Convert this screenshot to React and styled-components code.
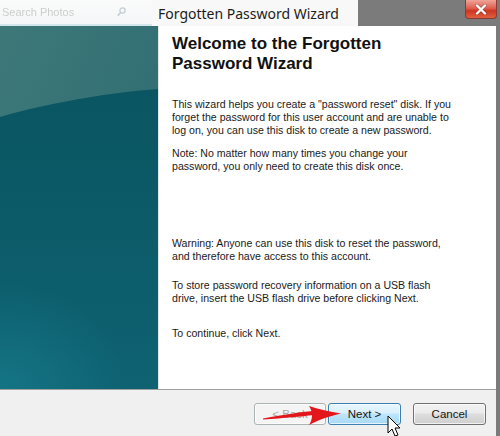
import React from 'react';
import styled, { createGlobalStyle } from 'styled-components';

const Global = createGlobalStyle`
  html, body { margin: 0; padding: 0; overflow: hidden; background: #7b7b7c; }
`;

const Page = styled.div`
  position: relative;
  width: 500px;
  height: 436px;
  display: grid;
  grid-template-rows: 26px 1fr;
  overflow: hidden;
  font-family: "Liberation Sans", Arial, sans-serif;
`;

const TopBar = styled.div`
  display: flex;
  background: #7b7b7c;
`;

const SearchArea = styled.div`
  width: 152px;
  display: flex;
  align-items: center;
  justify-content: space-between;
  padding: 0 26px 0 2px;
  box-sizing: border-box;
  background: linear-gradient(#fbfbfb, #f4f6f7);
  border-bottom: 2px solid #d3e6ec;
`;

const SearchHint = styled.span`
  font-size: 11px;
  color: #cdcdcd;
  filter: blur(0.7px);
`;

const TitleArea = styled.div`
  width: 206px;
  display: flex;
  align-items: center;
  padding-left: 6px;
  box-sizing: border-box;
  background: #f8f8f8;
  font-family: "Noto Sans", "Open Sans", sans-serif;
  font-size: 14px;
  color: #1c1c1c;
  white-space: nowrap;
`;

const GreyArea = styled.div`
  flex: 1;
  display: flex;
  justify-content: flex-end;
  align-items: flex-start;
  padding-right: 3px;
`;

const CloseButton = styled.div`
  width: 32px;
  height: 19px;
  display: flex;
  align-items: center;
  justify-content: center;
  border: 1px solid #8a3a33;
  border-top: none;
  border-radius: 0 0 4px 4px;
  background: linear-gradient(#eea598 0%, #e0604f 45%, #cf3522 60%, #e0603f 100%);
  box-sizing: border-box;
`;

const Body = styled.div`
  display: flex;
`;

const Window = styled.div`
  flex: 1;
  display: flex;
  flex-direction: column;
`;

const EdgeStrip = styled.div`
  width: 4px;
  background: #7b7b7c;
`;

const Main = styled.div`
  height: 363px;
  display: flex;
`;

const Sidebar = styled.div`
  width: 158px;
  flex-shrink: 0;
  line-height: 0;
`;

const Content = styled.div`
  flex: 1;
  background: #fff;
  border-left: 1px solid #e6e6e6;
  padding: 8px 0 0 13px;
`;

const Heading = styled.h1`
  margin: 0;
  font-family: "Liberation Sans", Arial, sans-serif;
  font-weight: bold;
  font-size: 17px;
  line-height: 20px;
  color: #111;
`;

const Para = styled.p`
  margin: ${p => p.$top}px 0 0;
  font-size: 10.6px;
  line-height: 13px;
  color: #1a1a1a;
  white-space: nowrap;
`;

const Footer = styled.div`
  flex: 1;
  background: #f0f0f0;
  border-top: 1px solid #a0a0a0;
  display: flex;
  justify-content: flex-end;
  align-items: flex-start;
  padding: 13px 10px 0 0;
`;

const Button = styled.div`
  width: ${p => p.$w}px;
  height: 22px;
  margin-left: ${p => p.$gap || 0}px;
  box-sizing: border-box;
  border-radius: 3px;
  display: flex;
  align-items: center;
  justify-content: center;
  font-size: 11.5px;
  color: ${p => (p.$disabled ? '#a6a6a6' : '#151515')};
  border: 1px solid ${p => (p.$disabled ? '#adb2b5' : p.$hot ? '#3c7fb1' : '#707070')};
  background: ${p =>
    p.$disabled
      ? '#f4f4f4'
      : p.$hot
      ? 'linear-gradient(#eaf6fd 0%, #d9f0fc 45%, #bee6fd 50%, #a7d9f5 100%)'
      : 'linear-gradient(#f2f2f2 0%, #ebebeb 45%, #dddddd 50%, #cfcfcf 100%)'};
  box-shadow: inset 0 0 0 1px rgba(255, 255, 255, 0.7);
`;

const Overlay = styled.svg`
  position: absolute;
  left: 0;
  top: 0;
  pointer-events: none;
`;

const SidebarArt = () => (
  <svg width="158" height="363" viewBox="0 0 158 363">
    <defs>
      <linearGradient id="top" x1="0" y1="0" x2="1" y2="1">
        <stop offset="0" stopColor="#3e7879" />
        <stop offset="1" stopColor="#2a6a70" />
      </linearGradient>
      <linearGradient id="arc" x1="0" y1="0" x2="0" y2="1">
        <stop offset="0" stopColor="#0a5561" />
        <stop offset="0.5" stopColor="#0e6272" />
        <stop offset="1" stopColor="#136c85" />
      </linearGradient>
      <radialGradient id="glow" cx="0" cy="1" r="0.8">
        <stop offset="0" stopColor="#1a8493" stopOpacity="0.55" />
        <stop offset="1" stopColor="#1a8493" stopOpacity="0" />
      </radialGradient>
    </defs>
    <rect width="158" height="363" fill="url(#top)" />
    <ellipse cx="230" cy="360" rx="520" ry="300" fill="url(#arc)" />
    <rect x="0" y="230" width="158" height="133" fill="url(#glow)" />
  </svg>
);

export default function App() {
  return (
    <>
      <Global />
      <Page>
        <TopBar>
          <SearchArea>
            <SearchHint>Search Photos</SearchHint>
            <svg width="9" height="10" viewBox="0 0 9 10">
              <circle cx="5.5" cy="3.5" r="2.6" fill="none" stroke="#c4cdd2" strokeWidth="1.3" />
              <line x1="3.6" y1="5.4" x2="0.8" y2="8.8" stroke="#c4cdd2" strokeWidth="1.6" />
            </svg>
          </SearchArea>
          <TitleArea>Forgotten Password Wizard</TitleArea>
          <GreyArea>
            <CloseButton>
              <svg width="12" height="11" viewBox="0 0 12 11">
                <path d="M2 1.5 L10 9.5 M10 1.5 L2 9.5" stroke="#4a1410" strokeWidth="3.6" strokeLinecap="round" opacity="0.35" />
                <path d="M2 1.5 L10 9.5 M10 1.5 L2 9.5" stroke="#fff" strokeWidth="2.4" strokeLinecap="round" />
              </svg>
            </CloseButton>
          </GreyArea>
        </TopBar>
        <Body>
          <Window>
            <Main>
              <Sidebar>
                <SidebarArt />
              </Sidebar>
              <Content>
                <Heading>
                  Welcome to the Forgotten
                  <br />
                  Password Wizard
                </Heading>
                <Para $top={24}>
                  This wizard helps you create a "password reset" disk. If you
                  <br />
                  forget the password for this user account and are unable to
                  <br />
                  log on, you can use this disk to create a new password.
                </Para>
                <Para $top={10}>
                  Note: No matter how many times you change your
                  <br />
                  password, you only need to create this disk once.
                </Para>
                <Para $top={64}>
                  Warning: Anyone can use this disk to reset the password,
                  <br />
                  and therefore have access to this account.
                </Para>
                <Para $top={16}>
                  To store password recovery information on a USB flash
                  <br />
                  drive, insert the USB flash drive before clicking Next.
                </Para>
                <Para $top={22}>To continue, click Next.</Para>
              </Content>
            </Main>
            <Footer>
              <Button $w={72} $disabled>&lt; Back</Button>
              <Button $w={73} $gap={2} $hot>Next &gt;</Button>
              <Button $w={73} $gap={12}>Cancel</Button>
            </Footer>
          </Window>
          <EdgeStrip />
        </Body>
        <Overlay width="500" height="436" viewBox="0 0 500 436">
          <path
            d="M263 419.5 C285 418 300 416.5 314 415 L313 411 C300 412 285 414.5 263 418.5 Z"
            fill="#e3161c"
          />
          <path
            d="M309 406 C318 409 330 411.5 341 413.5 C330 416 318 420 309 425 C313 419 313 412 309 406 Z"
            fill="#e3161c"
          />
          <path
            d="M388 416 L388 433 L392 429 L395 436 L398 435 L395 428 L400 428 Z"
            fill="#fff"
            stroke="#000"
            strokeWidth="1"
            strokeLinejoin="round"
          />
        </Overlay>
      </Page>
    </>
  );
}
